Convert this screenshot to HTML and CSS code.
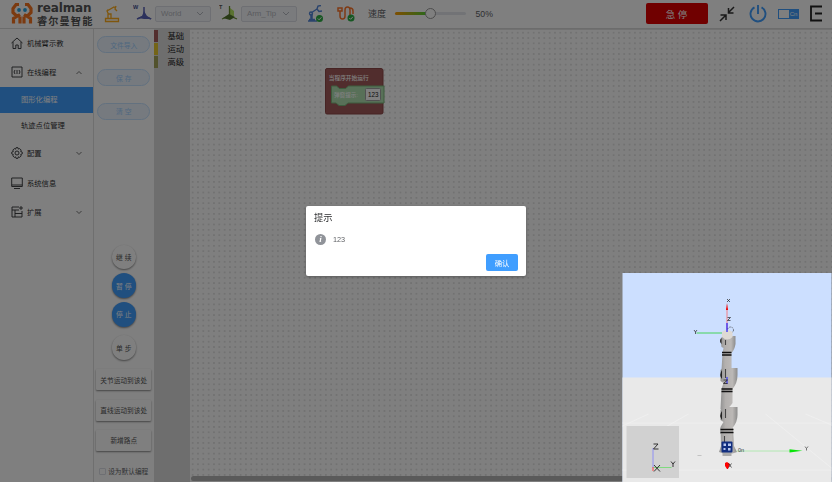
FILE: index.html
```html
<!DOCTYPE html>
<html lang="zh-CN">
<head>
<meta charset="utf-8">
<title>图形化编程</title>
<link rel="stylesheet" href="styles.css">
</head>
<body>
<div class="app">
  <header class="header">
    <div class="brand">
      <svg class="brand-mark" viewBox="0 0 22 22" fill="none" stroke="#f77420" stroke-width="3.2">
        <path d="M8 2H5L2 6v4l3 3h3M14 2h3l3 4v4l-3 3h-3M9 12L2.500 16v5M13 12l6.500 4v5M9 14v7M13 14v7"/>
        <circle cx="8" cy="7.500" r="1.900" fill="#2aa4e0" stroke="none"/><circle cx="14" cy="7.500" r="1.900" fill="#2aa4e0" stroke="none"/>
      </svg>
      <div class="brand-text"><div class="brand-en">realman</div><div class="brand-cn">睿尔曼智能</div></div>
    </div>
    <svg class="i-arm" viewBox="0 0 16 18" fill="none" stroke="#ffad1c" stroke-width="1.300"><path d="M1.500 13.500h13v3h-13zM4 13V9h3v4M4.500 9L3 6l7-4 2 1M12 1l-1 3 2 2M3 6l1-1.500"/></svg>
    <svg class="i-frame" viewBox="0 0 20 18"><text x="0" y="5" font-size="5.500" font-weight="700" fill="#444b90" font-family="Liberation Sans">W</text><path d="M11 3v9M11 12l-7 3M11 12l7 3" stroke="#5963b8" stroke-width="1.500"/><path d="M11 7l3 5 5 3-8 0-6-1 4-2z" fill="#5963b8"/></svg>
    <div class="select s-world"><span>World</span><svg viewBox="0 0 8 5"><path d="M1 1l3 3 3-3"/></svg></div>
    <svg class="i-frame tool" viewBox="0 0 20 18"><text x="0" y="5" font-size="5.500" font-weight="700" fill="#555" font-family="Liberation Sans">T</text><path d="M11 4l4 3v5h-4z" fill="#b6e663"/><path d="M10.500 2v10M10 12l-7 3M11 12l7 3" stroke="#6c8f31" stroke-width="1.300"/><path d="M10 10l6 3-5 3-7-2z" fill="#53752b"/></svg>
    <div class="select s-tip"><span>Arm_Tip</span><svg viewBox="0 0 8 5"><path d="M1 1l3 3 3-3"/></svg></div>
    <svg class="i-robot" viewBox="0 0 17 18" fill="none" stroke="#5487d8" stroke-width="1.400"><path d="M1 16h9M2 14.500h6" /><path d="M4.500 14V9" stroke-width="2.500"/><path d="M4 8l6-4M10 4l2 2.500 3-.5M10 4l1-3 3-.5"/><circle cx="4" cy="8.500" r="1.500"/><circle cx="12.500" cy="13.500" r="3.500" fill="#2cae45" stroke="none"/><path d="M10.800 13.500l1.300 1.300 2.300-2.500" stroke="#fff" stroke-width="1"/></svg>
    <svg class="i-route" viewBox="0 0 18 16" fill="none" stroke="#ff762b" stroke-width="1.500"><path d="M1 2h4v3H1zM3 5v5q0 3 2.500 3t2.500-3V4q0-3 2.500-3T13 4v6M12 2h1q3 0 3 3v3"/><circle cx="14" cy="12" r="3.500" fill="#2cae45" stroke="none"/><path d="M12.300 12l1.300 1.300 2.300-2.500" stroke="#fff" stroke-width="1"/></svg>
    <span class="speed-label">速度</span>
    <div class="slider"><div class="slider-fill"></div><div class="slider-knob"></div></div>
    <span class="speed-value">50%</span>
    <button class="estop">急 停</button>
    <svg class="i-shrink" viewBox="0 0 16 16" fill="none" stroke="#333" stroke-width="1.500"><path d="M15 1L9 7M9.500 2v5h5M1 15l6-6M1.500 9h5.500v5"/></svg>
    <svg class="i-power" viewBox="0 0 18 18" fill="none" stroke="#409eff" stroke-width="1.900"><path d="M9 0v9M5.500 2.300a7.500 7.500 0 1 0 7 0"/></svg>
    <div class="lang"><span class="lang-off"></span><span class="lang-on">Cn</span></div>
    <svg class="i-exit" viewBox="0 0 12 16" fill="none" stroke="#222" stroke-width="1.800"><path d="M12 1H1v14h11M5 8h7"/></svg>
  </header>
  <main class="main">
    <nav class="sidebar">
      <div class="item"><svg viewBox="0 0 12 12"><path d="M.5 6L6 1l5.500 5M2 5v6.500h2.800V8h2.400v3.500H10V5"/></svg><span>机械臂示教</span></div>
      <div class="item"><svg viewBox="0 0 12 12"><path d="M1 1h10v10H1zM4 4L3 6l1 2M8 4l1 2-1 2M6 4v4"/></svg><span>在线编程</span><svg class="chev" viewBox="0 0 8 5"><path d="M1.500 4L4 1.500 6.500 4"/></svg></div>
      <div class="sub active">图形化编程</div>
      <div class="sub">轨迹点位管理</div>
      <div class="item"><svg viewBox="0 0 12 12"><path d="M5 .7h2l.4 1.400 1.300-.5 1.500 1.500-.6 1.300 1.600.6v2l-1.600.6.6 1.300-1.500 1.500-1.300-.6-.4 1.500H5l-.5-1.500-1.200.6-1.500-1.500.6-1.300L.8 7V5l1.600-.6-.6-1.300 1.500-1.500 1.200.6z"/><circle cx="6" cy="6" r="2"/></svg><span>配置</span><svg class="chev" viewBox="0 0 8 5"><path d="M1.500 1L4 3.500 6.500 1"/></svg></div>
      <div class="item"><svg viewBox="0 0 12 12"><path d="M.7 1h10.600v8.500H.7zM.7 8h10.600M3 11.500h6"/></svg><span>系统信息</span></div>
      <div class="item"><svg viewBox="0 0 12 12"><path d="M8 1H1v10h10V5M1 4h7M4 4v7M4 7.500h7M10 0v4M8 2h4"/></svg><span>扩展</span><svg class="chev" viewBox="0 0 8 5"><path d="M1.500 1L4 3.500 6.500 1"/></svg></div>
    </nav>
    <aside class="controls">
      <div class="pills"><button class="pill">文件导入</button><button class="pill">保 存</button><button class="pill">清 空</button></div>
      <div class="rounds"><button class="round">继 续</button><button class="round blue">暂 停</button><button class="round blue">停 止</button><button class="round step">单 步</button></div>
      <div class="moves"><button class="move">关节运动到该处</button><button class="move">直线运动到该处</button><button class="move">新增路点</button></div>
      <label class="default"><i></i>设为默认编程</label>
    </aside>
    <div class="toolbox">
      <div class="cat basic">基础</div><div class="cat motion">运动</div><div class="cat advanced">高级</div>
    </div>
    <section class="canvas">
      <svg class="block" viewBox="0 0 60 48">
        <path d="M2 .5h54q2 0 2 2v42q0 1.500-2 1.500H2q-1.500 0-1.500-1.500V2Q.5.500 2 .5z" fill="#a35a5a" stroke="#8c4848"/>
        <path d="M6.500 18h5l3 2.500h6l3-2.500H59v17H23l-3 2.500h-6L11 35H6.500z" fill="#b0e0b0" stroke="#7bb77b"/>
        <rect x="40.500" y="20.500" width="15" height="12" rx="1" fill="#fff" stroke="#a3a3a3"/>
        <text x="3.800" y="11.500" font-size="5.700" font-weight="500" fill="#fff">当程序开始运行</text>
        <text x="9" y="29" font-size="5.600" font-weight="500" fill="#fff">弹窗提示:</text>
        <text x="43" y="29" font-size="6.300" fill="#222">123</text>
      </svg>
      <div class="scrollbar"></div>
    </section>
  </main>
</div>

<div class="mask">
  <div class="dialog" role="dialog">
    <div class="dialog-title">提示</div>
    <div class="dialog-body"><i class="info">i</i><span>123</span></div>
    <div class="dialog-foot"><button class="confirm">确认</button></div>
  </div>
</div>

<div class="viewer">
  <svg viewBox="0 0 209 209">
    <defs>
      <linearGradient id="metal"><stop offset="0" stop-color="#929292"/><stop offset=".3" stop-color="#b3b0ae"/><stop offset=".7" stop-color="#bbb8b6"/><stop offset="1" stop-color="#8c8c8c"/></linearGradient>
    </defs>
    <rect width="209" height="209" fill="#ccdfff"/>
    <rect y="104.500" width="209" height="105" fill="#e9e9e9"/>
    <path d="M0 150h209M0 197h209M26 141L0 153M66 141L20 167M143 141l66 54M183 141l26 11" stroke="#f4f4f4" stroke-width=".6"/>
    <rect x="4" y="153" width="52.500" height="52" fill="#d1d1d1"/>
    <path d="M30.500 195V175" stroke="#8080ff" stroke-width=".8"/><path d="M31 194.500h18" stroke="#6bdc6b" stroke-width=".8"/><path d="M30.500 194v4" stroke="#f44" stroke-width="1"/>
    <g fill="none" stroke="#222" stroke-width=".9"><path d="M31.500 192l6 6.500M37.500 192l-6 6.500M31 171h4.500l-4.500 5h5M48.500 188.500l2 2.500 2-2.500M50.500 191v3"/></g>
    <path d="M104.500 59V35" stroke="#f66" stroke-width=".8"/><path d="M104.500 30l-1 7h2z" fill="#e00"/>
    <path d="M104 60H74" stroke="#25cf2d" stroke-width=".8"/>
    <path d="M71.500 57l1.500 2 1.500-2M73 59v2M104.500 26l3 3M107.500 26l-3 3M105 44.500h3l-3 3h3" fill="none" stroke="#222" stroke-width=".7"/>
    <circle cx="108" cy="57" r="3" fill="none" stroke="#333" stroke-width=".7" stroke-dasharray="1.500 1"/>
    <path d="M98 66q1-3 6-3h9v8q-1 6-4 9v15q-2 3-8 6l-2-4 1-17 1-5-2-1z" fill="url(#metal)"/>
    <path d="M99.500 59q5-4 10.500 0v5q-5 5-10.500 0z" fill="#ded9d4"/>
    <path d="M104.500 59V50" stroke="#22f" stroke-width="1.200"/>
    <path d="M98 97q1-2 5-2h12v7q0 8-5 14v14q-3 5-8 7l-4-1 1-20 2-6-3-2z" fill="url(#metal)"/>
    <path d="M98 137q1-3 5-3h12v8q0 7-5 13v6H98v-7l3-5-3-2z" fill="url(#metal)"/>
    <path d="M98 155h12.500l1 18 3 6q-9 4-18 0l2-6z" fill="url(#metal)"/>
    <path d="M100 179h9v4h-9z" fill="#aaa"/>
    <path d="M99.500 79.500h9.500M99.500 82h9.500M99 116h11M99 118.500h11M98 156.500h13M98 159.500h13" stroke="#111" stroke-width="1.300"/>
    <path d="M99 65q-3 3 0 6zM99.500 97q-3.500 5 0 9zM99.500 138q-3.500 4.500 0 9z" fill="#222"/>
    <path d="M103 67v5M103 96v9M103 136v9M102 163v6" stroke="#444" stroke-width="1.100"/>
    <path d="M104.500 104v7" stroke="#22f"/><path d="M101 107h4l-4 3.500h4" fill="none" stroke="#222" stroke-width=".8"/>
    <rect x="99" y="168.500" width="11" height="11" rx="1" fill="#122f80"/><path d="M101 170.500h2.500v2.500H101zM105.500 170.500h3v2.500h-3zM101 175h2v2h-2zM105.500 175h2.500v2.500h-2.500z" fill="#b9c8ef"/>
    <path d="M114 178h55" stroke="#a3e7a3" stroke-width=".8"/><path d="M167 176.300l13 1.500-13 1.700z" fill="#08e508"/>
    <path d="M182.500 173.500l1.500 2 1.500-2M184 175.500v2" fill="none" stroke="#444" stroke-width=".7"/><path d="M75 182.500h4" stroke="#aaa" stroke-width=".6"/>
    <text x="115.500" y="179" font-size="5.500" fill="#344">0n</text>
    <path d="M102.500 190l2-1 3 2-2 5h-1l-2-3z" fill="#f00"/><path d="M106 190.500l3 4M109 190.500l-3 4" stroke="#222" stroke-width=".7"/>
  </svg>
</div>
</body>
</html>
```
FILE: styles.css
```css
* { box-sizing: border-box; }
body {
  margin: 0;
  width: 832px;
  height: 482px;
  overflow: hidden;
  background: #fff;
  color: #303133;
  font: 7.3px "Liberation Sans", "Noto Sans CJK SC", sans-serif;
}
button { border: 0; padding: 0; font: inherit; white-space: nowrap; }
.app { height: 482px; display: flex; flex-direction: column; }

/* Header */
.header {
  height: 28.5px;
  flex: none;
  display: flex;
  align-items: center;
  border-bottom: 1px solid #d8d8d8;
}
.header > * { flex: none; }
.brand { display: flex; margin-left: 11px; width: 83px; height: 25px; gap: 4px; }
.brand-mark { width: 22px; height: 23px; margin-top: 1px; flex: none; }
.brand-en { font: 700 12px/14px "DejaVu Sans", sans-serif; height: 13.5px; color: #555; letter-spacing: -.15px; }
.brand-cn { font: 700 10.2px/11px "Noto Sans CJK SC", sans-serif; color: #555; letter-spacing: 1.1px; white-space: nowrap; }
.i-arm { width: 16px; height: 18px; margin-left: 10px; }
.i-frame { width: 20px; height: 18px; margin-left: 12.5px; margin-top: -2px; }
.select {
  height: 16px;
  border: 1px solid #dcdfe6;
  border-radius: 2px;
  background: #f5f7fa;
  color: #b4b8c0;
  display: flex;
  align-items: center;
  justify-content: space-between;
  padding: 0 6px 0 5px;
  font-size: 7.8px;
}
.select svg { width: 8px; height: 5px; fill: none; stroke: #b4b8c0; }
.s-world { width: 56px; margin-left: 2.5px; }
.tool { margin-left: 8px; }
.s-tip { width: 56px; margin-left: 2px; }
.i-robot { width: 17px; height: 18px; margin-left: 9.5px; }
.i-route { width: 18px; height: 16px; margin-left: 13.5px; }
.speed-label { margin-left: 13px; font-size: 9px; color: #606266; }
.slider { width: 71px; height: 3px; margin-left: 9px; border-radius: 2px; background: #e4e7ed; display: flex; align-items: center; }
.slider-fill { width: 35px; height: 3px; border-radius: 2px; background: linear-gradient(90deg, #ff9d00, #43d43b); }
.slider-knob { width: 11px; height: 11px; flex: none; margin-left: -5.5px; border: 1px solid #999; border-radius: 50%; background: #fff; }
.speed-value { margin-left: 9.5px; width: 20px; font-size: 8.7px; color: #606266; }
.estop { width: 62px; height: 21px; margin-left: 150px; border-radius: 2px; background: #e00000; color: #fff; font-size: 9.5px; }
.i-shrink { width: 16px; height: 16px; margin-left: 11px; }
.i-power { width: 18px; height: 18px; margin-left: 14.5px; }
.lang { width: 21px; height: 10px; margin-left: 11px; display: flex; background: #409eff; border: 1px solid #409eff; }
.lang-off { width: 10px; background: #fff; }
.lang-on { flex: 1; text-align: center; font-size: 6px; line-height: 8px; color: #fff; }
.i-exit { width: 12px; height: 17px; margin-left: 10.5px; }

/* Navigation */
.main { flex: 1; min-height: 0; display: flex; }
.sidebar { width: 94px; flex: none; border-right: 1px solid #dedede; }
.item { height: 29.3px; display: flex; align-items: center; padding: 0 10px .5px 10.5px; gap: 4.5px; }
.item svg { width: 12px; height: 12px; fill: none; stroke: #303133; stroke-width: .9; }
.item .chev { width: 8px; height: 5px; margin-left: auto; stroke: #666; }
.sub { height: 26px; line-height: 25.5px; padding-left: 21px; }
.active { background: #409eff; color: #fff; }

/* Program controls */
.controls { width: 59.5px; flex: none; display: flex; flex-direction: column; align-items: center; }
.pills { padding-top: 7.5px; display: flex; flex-direction: column; gap: 16.4px; }
.pill { width: 53px; height: 17px; border: 1px solid #c6e2ff; border-radius: 9px; background: #ecf5ff; color: #a0cfff; font-size: 6.8px; }
.rounds { margin-top: 125px; display: flex; flex-direction: column; gap: 4.2px; }
.round { width: 24.5px; height: 24.5px; border-radius: 50%; background: #fff; color: #555; box-shadow: 0 1px 2px #888; font-size: 6.8px; }
.blue { background: #409eff; color: #fff; }
.step { margin-top: 4.5px; }
.moves { margin-top: 9.5px; display: flex; flex-direction: column; gap: 9.3px; }
.move { width: 55px; height: 21px; border-radius: 1px; background: #fff; color: #555; box-shadow: 0 1px 2px #888; font-size: 6.7px; }
.default { margin-top: 15.5px; display: flex; align-items: center; gap: 2px; font-size: 6.7px; color: #606266; white-space: nowrap; }
.default i { width: 7px; height: 7px; border: 1px solid #dcdfe6; border-radius: 1px; }

/* Block workspace */
.toolbox { width: 36.5px; flex: none; background: #ddd; padding-top: 1.5px; }
.cat { height: 12px; margin-bottom: 1px; border-left: 4px solid; padding-left: 10px; font-size: 8.3px; line-height: 12px; color: #222; }
.basic { border-left-color: #a65c5c; }
.motion { border-left-color: #e9c92e; }
.advanced { border-left-color: #a5a55b; }
.canvas {
  flex: 1;
  position: relative;
  background: radial-gradient(circle, #d0d0d0 .5px, transparent .8px) 0 0 / 5.33px 5.33px #fff;
  border-top: 1px solid #e2e2e2;
}
.block { position: absolute; left: 135px; top: 38.5px; width: 60px; height: 48px; }
.scrollbar { position: absolute; left: 1px; right: 0; bottom: 1px; height: 5px; border-radius: 3px; background: #b5b5b5; }

/* Dialog */
.mask { position: fixed; inset: 0; background: rgba(0, 0, 0, .5); display: flex; align-items: center; justify-content: center; }
.dialog { width: 220px; height: 70.5px; border-radius: 2px; background: #fff; box-shadow: 0 1px 3px rgba(0, 0, 0, .3); padding: 7px 8px 5px; display: flex; flex-direction: column; }
.dialog-title { font-size: 9.3px; line-height: 11px; color: #303133; }
.dialog-body { display: flex; align-items: center; gap: 7px; height: 11px; margin: 10.5px 0 0 1px; font-size: 7.3px; color: #606266; }
.info { width: 11px; height: 11px; border-radius: 50%; background: #909399; color: #fff; text-align: center; font: italic 700 9px/11px "Liberation Serif", serif; }
.dialog-foot { margin-top: auto; display: flex; justify-content: flex-end; }
.confirm { width: 32px; height: 17px; border-radius: 2px; background: #409eff; color: #fff; font-size: 7.3px; }

/* 3D preview */
.viewer { position: fixed; left: 622px; top: 273px; width: 210px; height: 209px; }
.viewer svg { display: block; width: 210px; height: 209px; }
```
